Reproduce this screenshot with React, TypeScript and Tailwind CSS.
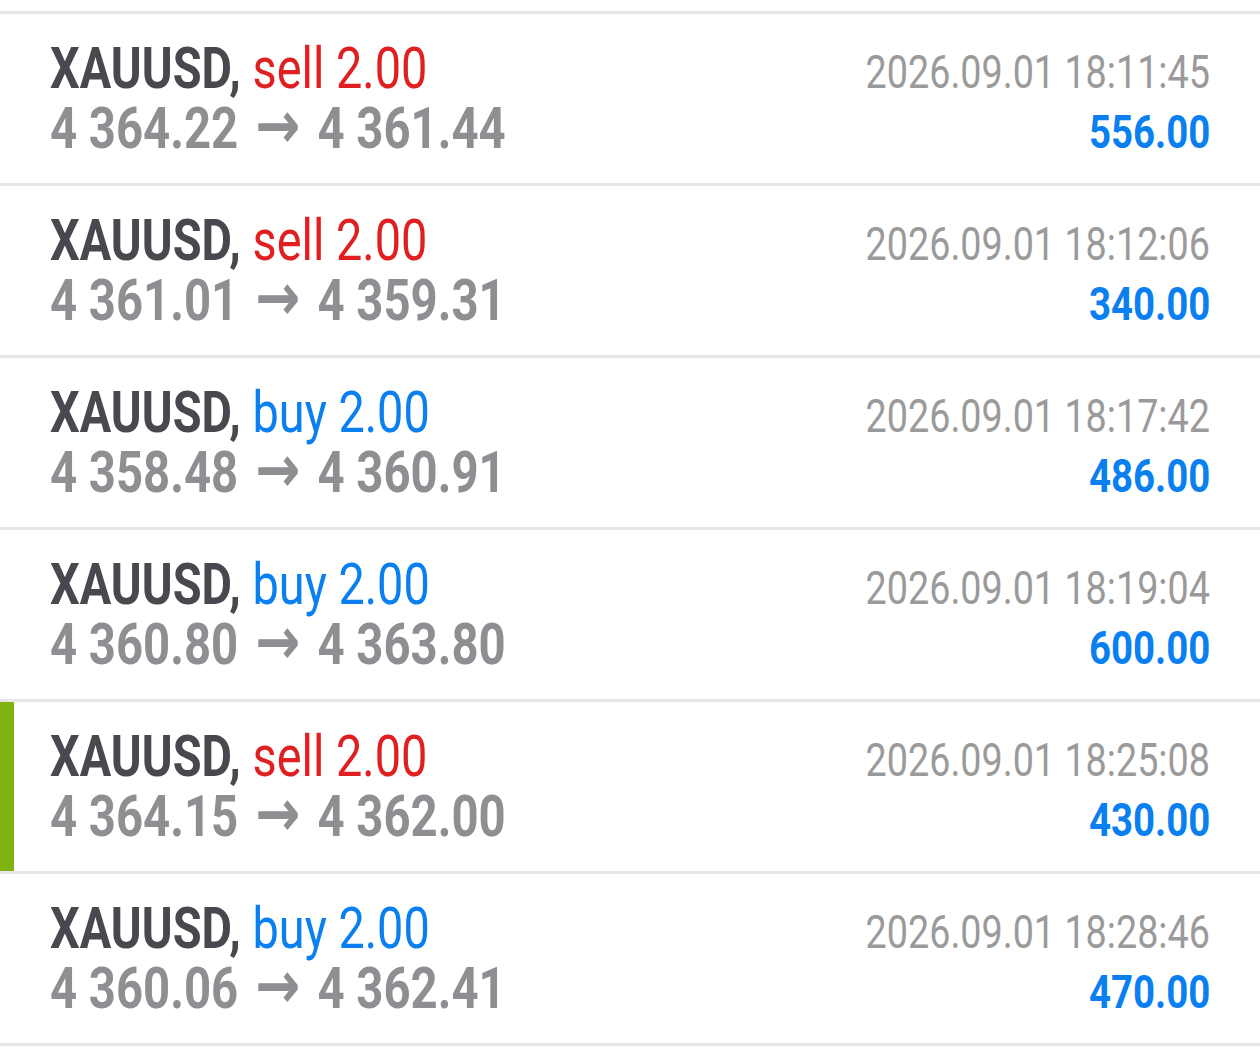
import React from "react";

type Deal = { side: "buy" | "sell"; open: string; close: string; time: string; profit: string; active?: boolean };

const deals: Deal[] = [
  { side: "sell", open: "4 364.22", close: "4 361.44", time: "2026.09.01 18:11:45", profit: "556.00" },
  { side: "sell", open: "4 361.01", close: "4 359.31", time: "2026.09.01 18:12:06", profit: "340.00" },
  { side: "buy", open: "4 358.48", close: "4 360.91", time: "2026.09.01 18:17:42", profit: "486.00" },
  { side: "buy", open: "4 360.80", close: "4 363.80", time: "2026.09.01 18:19:04", profit: "600.00" },
  { side: "sell", open: "4 364.15", close: "4 362.00", time: "2026.09.01 18:25:08", profit: "430.00", active: true },
  { side: "buy", open: "4 360.06", close: "4 362.41", time: "2026.09.01 18:28:46", profit: "470.00" },
];

function Row({ d }: { d: Deal }) {
  return (
    <div className="relative bg-white h-[169px] pt-[24px] pl-[50px] pr-[50px]">
      {d.active && <div className="absolute left-0 top-0 bottom-0 w-[14px] bg-[#7fb20e]" />}
      <div className="flex justify-between items-baseline h-[60px] leading-[60px]">
        <div className="whitespace-nowrap origin-left scale-x-[0.808] text-[58px]">
          <span className="font-bold text-[#48484f]">XAUUSD, </span>
          <span className={d.side === "sell" ? "text-[#e02020]" : "text-[#0a7ff0]"}>
            {d.side} 2.00
          </span>
        </div>
        <div className="whitespace-nowrap origin-right scale-x-[0.82] text-[46px] text-[#9a9a9a]">{d.time}</div>
      </div>
      <div className="flex justify-between items-baseline h-[60px] leading-[60px]">
        <div className="whitespace-nowrap origin-left scale-x-[0.815] text-[58px] font-bold text-[#8e8e93]">
          <span>{d.open}</span>
          <span
            className="relative top-[0px] ml-[21px] mr-[21px] font-bold text-[66px] leading-[0px]"
            style={{ fontFamily: "'DejaVu Sans', sans-serif" }}
          >
            →
          </span>
          <span>{d.close}</span>
        </div>
        <div className="whitespace-nowrap origin-right scale-x-[0.835] text-[46px] font-bold text-[#0a7ff0]">{d.profit}</div>
      </div>
    </div>
  );
}

export default function App() {
  return (
    <div className="w-[1260px] h-[1064px] bg-white overflow-hidden" style={{ fontFamily: "Roboto, sans-serif" }}>
      <div className="h-[11px]" />
      <div className="flex flex-col">
        {deals.map((d, i) => (
          <React.Fragment key={i}>
            <div className="h-[3px] bg-[#e6e6e6]" />
            <Row d={d} />
          </React.Fragment>
        ))}
        <div className="h-[3px] bg-[#e6e6e6]" />
      </div>
    </div>
  );
}
